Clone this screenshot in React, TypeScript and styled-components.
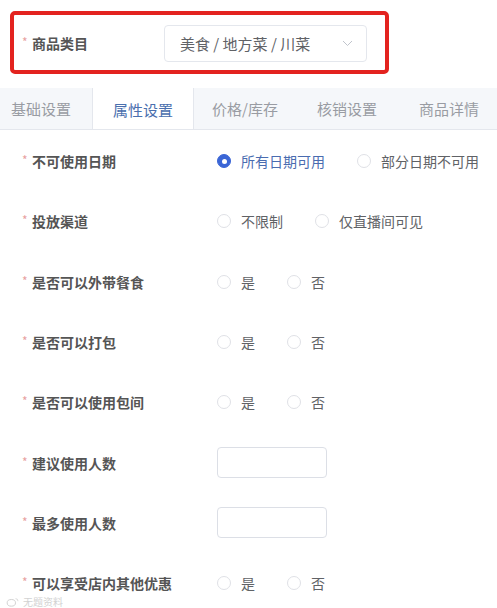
import React from 'react';
import styled, { createGlobalStyle } from 'styled-components';

const GlobalStyle = createGlobalStyle`
  html, body {
    margin: 0;
    padding: 0;
    background: #fff;
    font-family: "Noto Sans CJK SC", "Noto Sans", sans-serif;
  }
`;

const Page = styled.div`
  position: relative;
  width: 497px;
  height: 608px;
  overflow: hidden;
  background: #fff;
`;

const Header = styled.div`
  padding: 11px 0 0 10px;
  height: 88px;
  box-sizing: border-box;
`;

const Highlight = styled.div`
  width: 379px;
  height: 63px;
  box-sizing: border-box;
  border: 4px solid #e3231f;
  border-radius: 5px;
  display: flex;
  align-items: center;
  padding-left: 8px;
`;

const Label = styled.div<{ width?: number }>`
  width: ${p => p.width || 195}px;
  flex-shrink: 0;
  display: flex;
  align-items: center;
  white-space: nowrap;
  font-size: 14px;
  font-weight: 700;
  color: #555;
`;

const Star = styled.span`
  color: #e8a1a1;
  font-size: 12px;
  font-weight: 400;
  width: 10px;
  margin-top: -3px;
`;

const Select = styled.div`
  width: 203px;
  height: 37px;
  margin-top: 2px;
  box-sizing: border-box;
  border: 1px solid #e4e7ed;
  border-radius: 4px;
  display: flex;
  align-items: center;
  justify-content: space-between;
  padding: 0 13px 0 15px;
  font-size: 15px;
  color: #606266;
`;

const TabBar = styled.div`
  display: flex;
  height: 42px;
  box-sizing: border-box;
  background: #f5f7fa;
  border-bottom: 1px solid #e4e7ed;
  overflow: hidden;
`;

const Tab = styled.div<{ active?: boolean; first?: boolean }>`
  width: 102px;
  flex-shrink: 0;
  margin-left: ${p => (p.first ? '-10px' : '0')};
  height: ${p => (p.active ? '42px' : '41px')};
  box-sizing: border-box;
  display: flex;
  align-items: center;
  justify-content: center;
  white-space: nowrap;
  font-size: 15px;
  color: ${p => (p.active ? '#4a6fae' : '#999ca3')};
  background: ${p => (p.active ? '#fff' : 'transparent')};
  border-left: 1px solid ${p => (p.active ? '#e4e7ed' : 'transparent')};
  border-right: 1px solid ${p => (p.active ? '#e4e7ed' : 'transparent')};
`;

const Form = styled.div`
  padding-top: 1px;
`;

const Row = styled.div`
  height: 60.3px;
  display: flex;
  align-items: center;
  padding-left: 22px;
`;

const RadioGroup = styled.div`
  display: flex;
  align-items: center;
  flex-shrink: 0;
`;

const RadioItem = styled.label<{ checked?: boolean }>`
  display: flex;
  align-items: center;
  flex-shrink: 0;
  white-space: nowrap;
  margin-right: 32px;
  font-size: 14px;
  color: ${p => (p.checked ? '#4a6cb0' : '#606266')};
`;

const Dot = styled.span<{ checked?: boolean }>`
  width: 14px;
  height: 14px;
  flex-shrink: 0;
  box-sizing: border-box;
  border-radius: 50%;
  margin-right: 10px;
  border: 1px solid ${p => (p.checked ? '#3b66d6' : '#dfe1e6')};
  background: ${p => (p.checked ? '#3b66d6' : '#fff')};
  display: flex;
  align-items: center;
  justify-content: center;

  &::after {
    content: '';
    width: 5px;
    height: 5px;
    border-radius: 50%;
    background: #fff;
    display: ${p => (p.checked ? 'block' : 'none')};
  }
`;

const Input = styled.div`
  width: 110px;
  height: 31px;
  box-sizing: border-box;
  border: 1px solid #dcdfe6;
  border-radius: 4px;
`;

const Watermark = styled.div`
  position: absolute;
  left: 6px;
  bottom: 1px;
  display: flex;
  align-items: center;
  gap: 3px;
  font-size: 10px;
  line-height: 11px;
  color: #d2d2d2;
`;

type RadioOpt = { text: string; checked?: boolean };

const Radios = ({ options }: { options: RadioOpt[] }) => (
  <RadioGroup>
    {options.map(o => (
      <RadioItem key={o.text} checked={o.checked}>
        <Dot checked={o.checked} />
        {o.text}
      </RadioItem>
    ))}
  </RadioGroup>
);

const yesNo: RadioOpt[] = [{ text: '是' }, { text: '否' }];

type Field = { label: string; kind: 'radio' | 'input'; options?: RadioOpt[] };

const fields: Field[] = [
  { label: '不可使用日期', kind: 'radio', options: [{ text: '所有日期可用', checked: true }, { text: '部分日期不可用' }] },
  { label: '投放渠道', kind: 'radio', options: [{ text: '不限制' }, { text: '仅直播间可见' }] },
  { label: '是否可以外带餐食', kind: 'radio', options: yesNo },
  { label: '是否可以打包', kind: 'radio', options: yesNo },
  { label: '是否可以使用包间', kind: 'radio', options: yesNo },
  { label: '建议使用人数', kind: 'input' },
  { label: '最多使用人数', kind: 'input' },
  { label: '可以享受店内其他优惠', kind: 'radio', options: yesNo },
];

const tabs = ['基础设置', '属性设置', '价格/库存', '核销设置', '商品详情'];

const Chevron = () => (
  <svg width="11" height="7" viewBox="0 0 11 7" fill="none">
    <path d="M1 1l4.5 4.5L10 1" stroke="#c0c4cc" strokeWidth="1" />
  </svg>
);

export default function App() {
  return (
    <Page>
      <GlobalStyle />
      <Header>
        <Highlight>
          <Label width={142}>
            <Star>*</Star>商品类目
          </Label>
          <Select>
            <span>美食 / 地方菜 / 川菜</span>
            <Chevron />
          </Select>
        </Highlight>
      </Header>
      <TabBar>
        {tabs.map((t, i) => (
          <Tab key={t} first={i === 0} active={i === 1}>
            {t}
          </Tab>
        ))}
      </TabBar>
      <Form>
        {fields.map(f => (
          <Row key={f.label}>
            <Label>
              <Star>*</Star>
              {f.label}
            </Label>
            {f.kind === 'radio' ? <Radios options={f.options || []} /> : <Input />}
          </Row>
        ))}
      </Form>
      <Watermark>
        <svg width="14" height="10" viewBox="0 0 16 12" fill="none">
          <ellipse cx="6" cy="7" rx="5" ry="4" stroke="#d2d2d2" strokeWidth="1.2" />
          <path d="M11 2a3 3 0 0 1 3 3" stroke="#d2d2d2" strokeWidth="1" />
        </svg>
        无题资料
      </Watermark>
    </Page>
  );
}
